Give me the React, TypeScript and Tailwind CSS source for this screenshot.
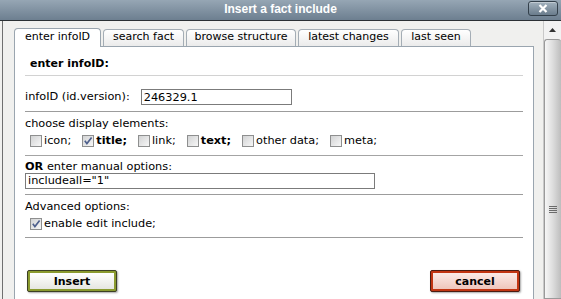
import React from 'react'

const font = { fontFamily: '"DejaVu Sans", Verdana, sans-serif' }

function Box({ checked = false }: { checked?: boolean }) {
  return (
    <span className="flex h-[12px] w-[12px] shrink-0 items-center justify-center border border-[#8e8f8f] bg-white">
      <span className="relative flex h-[10px] w-[10px] items-center justify-center bg-gradient-to-br from-[#d2d3d4] to-[#f7f7f7]">
        {checked && (
          <svg width="10" height="10" viewBox="0 0 10 10" className="absolute inset-0">
            <path d="M1.8 4.8 L3.9 7.6 L8.6 1.4" fill="none" stroke="#4d5f8c" strokeWidth="1.6" />
          </svg>
        )}
      </span>
    </span>
  )
}

function Item({ label, bold = false, checked = false }: { label: string; bold?: boolean; checked?: boolean }) {
  return (
    <span className="flex items-center gap-[2px]">
      <Box checked={checked} />
      <span className={bold ? 'font-bold' : ''}>{label}</span>
    </span>
  )
}

const tabs = [
  { label: 'enter infoID', w: 'w-[87px]', active: true },
  { label: 'search fact', w: 'w-[81px]' },
  { label: 'browse structure', w: 'w-[110px]' },
  { label: 'latest changes', w: 'w-[101px]' },
  { label: 'last seen', w: 'w-[70px]' },
]

export default function App() {
  return (
    <div className="flex h-[299px] w-[561px] flex-col overflow-hidden bg-[#f0f0ee] text-[11px] text-black" style={font}>
      {/* title bar */}
      <div className="grid h-[21px] shrink-0 grid-cols-[1fr_auto_1fr] items-center border-b border-[#2b3034] bg-gradient-to-b from-[#96a6b4] to-[#6d7f90]">
        <div />
        <div className="pb-[2px] text-[12px] font-bold text-white" style={{ fontFamily: '"Liberation Sans", Arial, sans-serif' }}>
          Insert a fact include
        </div>
        <div className="flex justify-end pr-[3px] pb-[3px]">
          <button className="flex h-[15px] w-[30px] items-center justify-center rounded-[3px] border border-[#33404b] bg-gradient-to-b from-[#a3b2be] to-[#6a7c8c] shadow-[inset_0_1px_0_rgba(255,255,255,0.35)]">
            <svg width="10" height="9" viewBox="0 0 10 9">
              <path d="M1.5 1 L8.5 8 M8.5 1 L1.5 8" stroke="white" strokeWidth="2.2" />
            </svg>
          </button>
        </div>
      </div>

      {/* body */}
      <div className="flex min-h-0 flex-1 pl-[2px]">
        <div className="flex min-w-0 flex-1 flex-col border-l border-[#6f6f6f] pl-[11px] pt-[7px]">
          {/* tabs */}
          <div className="flex items-end gap-[2px]">
            {tabs.map((t) =>
              t.active ? (
                <div
                  key={t.label}
                  className={`relative z-10 -mb-px flex h-[19px] ${t.w} items-center justify-center rounded-t-[4px] border border-b-0 border-[#9aa5af] bg-white pb-[2px]`}
                >
                  {t.label}
                </div>
              ) : (
                <div
                  key={t.label}
                  className={`flex h-[17px] ${t.w} items-center justify-center rounded-t-[4px] border border-b-0 border-[#a4adb5] bg-gradient-to-b from-white to-[#ebebeb] pb-[1px]`}
                >
                  {t.label}
                </div>
              ),
            )}
          </div>

          {/* panel */}
          <div className="w-[520px] shrink-0 border border-[#9aa5af] bg-white px-[10px] pb-[40px] text-[11.3px]">
            <div className="border-b border-[#d2d2d2] pb-[4px] pl-[5px] pt-[10px] text-[11px] font-bold leading-[14px]">enter infoID:</div>

            <div className="flex items-center gap-[11px] border-b border-[#9c9c9c] pb-[6px] pt-[13px]">
              <span className="leading-[14px]">infoID (id.version):</span>
              <div className="flex h-[16px] w-[151px] items-center border border-[#7b7b7b] bg-white pl-[2px] pt-[2px]">246329.1</div>
            </div>

            <div className="border-b border-[#a4a4a4] pb-[7px] pt-[5px]">
              <div className="leading-[14px]">choose display elements:</div>
              <div className="mt-[3px] flex h-[14px] items-center gap-[11px] pl-[5px]">
                <Item label="icon;" />
                <Item label="title;" bold checked />
                <Item label="link;" />
                <Item label="text;" bold />
                <Item label="other data;" />
                <Item label="meta;" />
              </div>
            </div>

            <div className="border-b border-[#9c9c9c] pb-[5px] pt-[4px]">
              <div className="leading-[13px]">
                <span className="font-bold">OR</span> enter manual options:
              </div>
              <div className="flex h-[16px] w-[350px] items-center border border-[#7b7b7b] bg-white pl-[2px]">includeall="1"</div>
            </div>

            <div className="border-b border-[#9c9c9c] pb-[6px] pt-[5px]">
              <div className="leading-[14px]">Advanced options:</div>
              <div className="mt-[3px] flex h-[14px] items-center pl-[5px]">
                <Item label="enable edit include;" checked />
              </div>
            </div>

            <div className="mt-[32px] flex justify-between pl-[2px] pr-[3px] text-[11px]">
              <button className="h-[22px] w-[90px] rounded-[2px] border border-[#3c3f24] bg-[#8a9a2e] p-[2px] shadow-[1px_1px_2px_rgba(0,0,0,0.35)]">
                <span className="flex h-full w-full items-center justify-center bg-gradient-to-b from-white to-[#e6e6e0] font-bold leading-none">
                  Insert
                </span>
              </button>
              <button className="h-[22px] w-[90px] rounded-[2px] border border-[#4a1c12] bg-[#c23512] p-[2px] shadow-[1px_1px_2px_rgba(0,0,0,0.35)]">
                <span className="flex h-full w-full items-center justify-center bg-gradient-to-b from-[#fbebe7] to-[#efc6bc] font-bold leading-none">
                  cancel
                </span>
              </button>
            </div>
          </div>
        </div>

        {/* scrollbar */}
        <div className="flex w-[18px] shrink-0 flex-col border-l border-[#c9c9c9] bg-[#f2f2f2]">
          <div className="flex h-[18px] items-center justify-center">
            <svg width="7" height="4" viewBox="0 0 7 4">
              <path d="M0 4 L3.5 0 L7 4 Z" fill="#333" />
            </svg>
          </div>
          <div className="flex flex-1 items-start justify-center rounded-t-[3px] border border-r-0 border-[#9a9a9a] bg-gradient-to-r from-[#f6f6f6] via-[#dcdcdc] to-[#bdbdbd] pt-[166px]">
            <div className="flex w-[8px] flex-col gap-[1px]">
              <span className="h-px bg-[#6a6a6a]" />
              <span className="h-px bg-[#6a6a6a]" />
              <span className="h-px bg-[#6a6a6a]" />
              <span className="h-px bg-[#6a6a6a]" />
            </div>
          </div>
        </div>
      </div>
    </div>
  )
}
